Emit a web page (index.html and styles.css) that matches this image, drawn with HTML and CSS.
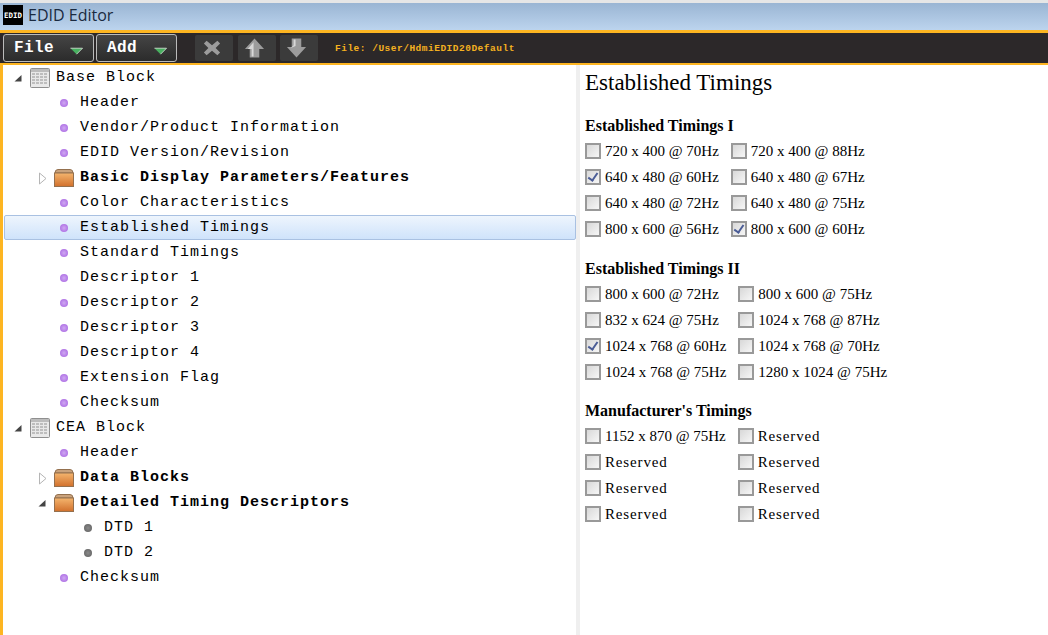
FILE: index.html
```html
<!DOCTYPE html>
<html lang="en">
    <head>
        <meta charset="utf-8">
        <title>EDID Editor</title>
        <link rel="stylesheet" href="styles.css">
    </head>
    <body>
        <svg class="defs" width="0" height="0">
            <symbol id="table" viewBox="0 0 20 20">
                <rect x="0.5" y="0.5" width="19" height="19" rx="1" fill="#e9e9e9" stroke="#8f8f8f"/>
                <rect x="1" y="1" width="18" height="3" fill="#bdbdbd"/>
                <path d="M2 6h16M2 9h16M2 12h16M2 15h16" stroke="#b0b0b0" stroke-width="1.4" stroke-dasharray="3 1"/>
            </symbol>
            <symbol id="folder" viewBox="0 0 20 20">
                <defs>
                    <linearGradient id="folder_fill" x1="0" y1="0" x2="0" y2="1">
                        <stop offset="0" stop-color="#f4b56e"/>
                        <stop offset="1" stop-color="#d1702c"/>
                    </linearGradient>
                </defs>
                <path d="M1 5 Q1 1.5 4 1.5 H16 Q19 1.5 19 5 Z" fill="#c9a27c" stroke="#94704e"/>
                <rect x="0.5" y="5" width="19" height="13.5" fill="url(#folder_fill)" stroke="#94704e"/>
            </symbol>
            <symbol id="open" viewBox="0 0 14 14">
                <path d="M10.5 4 V10.5 H3.5 Z" fill="#444"/>
            </symbol>
            <symbol id="closed" viewBox="0 0 14 14">
                <path d="M4.5 2 L11 7.5 L4.5 13 Z" fill="#fff" stroke="#b5b5b5"/>
            </symbol>
            <symbol id="caret" viewBox="0 0 14 8">
                <path d="M0.5 1 H13.5 L7 7.5 Z" fill="#48b060"/>
                <path d="M0.5 1 H13.5 L7 7.5" fill="none" stroke="#e8efe8" stroke-width="0.8"/>
            </symbol>
        </svg>

        <div class="titlebar">
            <span class="logo">EDID</span>
            <span class="app_name">EDID Editor</span>
        </div>

        <div class="toolbar">
            <button class="menu_btn file_btn">File <svg class="caret"><use href="#caret"/></svg></button>
            <button class="menu_btn add_btn">Add <svg class="caret"><use href="#caret"/></svg></button>
            <div class="tool_group">
                <button class="tool_btn">
                    <svg width="18" height="18" viewBox="0 0 20 20"><path d="M4 2 L10 7 L16 2 L19 5 L14 10 L19 15 L16 18 L10 13 L4 18 L1 15 L6 10 L1 5 Z" fill="#9c9c9c"/></svg>
                </button>
                <button class="tool_btn">
                    <svg width="21" height="22" viewBox="0 0 22 22"><path d="M11 1 L21 12 H16 V21 H6 V12 H1 Z" fill="#9c9c9c"/><path d="M10 5 L4 12 H8 V20 H10 Z" fill="#d8d8d8"/></svg>
                </button>
                <button class="tool_btn">
                    <svg width="21" height="22" viewBox="0 0 22 22"><path d="M11 21 L21 10 H16 V1 H6 V10 H1 Z" fill="#9c9c9c"/><path d="M8 2 H10 V9 L5 11 L8 8 Z" fill="#d8d8d8"/></svg>
                </button>
            </div>
            <span class="file_path">File: /User/HdmiEDID20Default</span>
        </div>

        <div class="main">
            <ul class="tree">
                <li class="row"><svg class="twisty"><use href="#open"/></svg><svg class="icon"><use href="#table"/></svg><span>Base Block</span></li>
                <li class="row d1"><span class="twisty"></span><span class="icon"><i class="dot"></i></span><span>Header</span></li>
                <li class="row d1"><span class="twisty"></span><span class="icon"><i class="dot"></i></span><span>Vendor/Product Information</span></li>
                <li class="row d1"><span class="twisty"></span><span class="icon"><i class="dot"></i></span><span>EDID Version/Revision</span></li>
                <li class="row d1"><svg class="twisty"><use href="#closed"/></svg><svg class="icon"><use href="#folder"/></svg><b>Basic Display Parameters/Features</b></li>
                <li class="row d1"><span class="twisty"></span><span class="icon"><i class="dot"></i></span><span>Color Characteristics</span></li>
                <li class="row d1 selected"><span class="twisty"></span><span class="icon"><i class="dot"></i></span><span>Established Timings</span></li>
                <li class="row d1"><span class="twisty"></span><span class="icon"><i class="dot"></i></span><span>Standard Timings</span></li>
                <li class="row d1"><span class="twisty"></span><span class="icon"><i class="dot"></i></span><span>Descriptor 1</span></li>
                <li class="row d1"><span class="twisty"></span><span class="icon"><i class="dot"></i></span><span>Descriptor 2</span></li>
                <li class="row d1"><span class="twisty"></span><span class="icon"><i class="dot"></i></span><span>Descriptor 3</span></li>
                <li class="row d1"><span class="twisty"></span><span class="icon"><i class="dot"></i></span><span>Descriptor 4</span></li>
                <li class="row d1"><span class="twisty"></span><span class="icon"><i class="dot"></i></span><span>Extension Flag</span></li>
                <li class="row d1"><span class="twisty"></span><span class="icon"><i class="dot"></i></span><span>Checksum</span></li>
                <li class="row"><svg class="twisty"><use href="#open"/></svg><svg class="icon"><use href="#table"/></svg><span>CEA Block</span></li>
                <li class="row d1"><span class="twisty"></span><span class="icon"><i class="dot"></i></span><span>Header</span></li>
                <li class="row d1"><svg class="twisty"><use href="#closed"/></svg><svg class="icon"><use href="#folder"/></svg><b>Data Blocks</b></li>
                <li class="row d1"><svg class="twisty"><use href="#open"/></svg><svg class="icon"><use href="#folder"/></svg><b>Detailed Timing Descriptors</b></li>
                <li class="row d2"><span class="twisty"></span><span class="icon"><i class="dot grey"></i></span><span>DTD 1</span></li>
                <li class="row d2"><span class="twisty"></span><span class="icon"><i class="dot grey"></i></span><span>DTD 2</span></li>
                <li class="row d1"><span class="twisty"></span><span class="icon"><i class="dot"></i></span><span>Checksum</span></li>
            </ul>

            <div class="details">
                <h1>Established Timings</h1>

                <h2>Established Timings I</h2>
                <div class="timings">
                    <label><input type="checkbox">720 x 400 @ 70Hz</label>
                    <label><input type="checkbox">720 x 400 @ 88Hz</label>
                    <label><input type="checkbox" checked>640 x 480 @ 60Hz</label>
                    <label><input type="checkbox">640 x 480 @ 67Hz</label>
                    <label><input type="checkbox">640 x 480 @ 72Hz</label>
                    <label><input type="checkbox">640 x 480 @ 75Hz</label>
                    <label><input type="checkbox">800 x 600 @ 56Hz</label>
                    <label><input type="checkbox" checked>800 x 600 @ 60Hz</label>
                </div>

                <h2>Established Timings II</h2>
                <div class="timings">
                    <label><input type="checkbox">800 x 600 @ 72Hz</label>
                    <label><input type="checkbox">800 x 600 @ 75Hz</label>
                    <label><input type="checkbox">832 x 624 @ 75Hz</label>
                    <label><input type="checkbox">1024 x 768 @ 87Hz</label>
                    <label><input type="checkbox" checked>1024 x 768 @ 60Hz</label>
                    <label><input type="checkbox">1024 x 768 @ 70Hz</label>
                    <label><input type="checkbox">1024 x 768 @ 75Hz</label>
                    <label><input type="checkbox">1280 x 1024 @ 75Hz</label>
                </div>

                <h2 class="last_title">Manufacturer's Timings</h2>
                <div class="timings">
                    <label><input type="checkbox">1152 x 870 @ 75Hz</label>
                    <label class="reserved"><input type="checkbox">Reserved</label>
                    <label class="reserved"><input type="checkbox">Reserved</label>
                    <label class="reserved"><input type="checkbox">Reserved</label>
                    <label class="reserved"><input type="checkbox">Reserved</label>
                    <label class="reserved"><input type="checkbox">Reserved</label>
                    <label class="reserved"><input type="checkbox">Reserved</label>
                    <label class="reserved"><input type="checkbox">Reserved</label>
                </div>
            </div>
        </div>
    </body>
</html>
```

FILE: styles.css
```css
html, body{
    margin: 0;
    height: 100%;
}

body{
    display: flex;
    flex-direction: column;
    height: 635px;
    overflow: hidden;
    background-color: white;
}

.defs{
    display: block;
    height: 0;
}

.titlebar{
    display: flex;
    align-items: center;
    box-sizing: border-box;
    height: 30px;
    padding-left: 3px;
    padding-bottom: 3px;
    border-top: 3px solid #e6e6e6;
    background: linear-gradient(#9ab5d3, #bcd4ee);
}

.logo{
    display: flex;
    align-items: center;
    justify-content: center;
    width: 20px;
    height: 20px;
    margin-right: 5px;
    background-color: black;
    color: white;
    font: bold 7.5px "DejaVu Sans Mono", monospace;
}

.app_name{
    font: 16px "Open Sans", sans-serif;
    color: #1a2a40;
}

.toolbar{
    display: flex;
    align-items: center;
    box-sizing: border-box;
    height: 35px;
    padding-left: 3px;
    border-top: 3px solid #fdb521;
    border-bottom: 2px solid #fdb521;
    background-color: #2c2829;
}

.menu_btn{
    display: flex;
    align-items: center;
    box-sizing: border-box;
    height: 28px;
    padding: 0 0 0 10px;
    border: 1px solid #bbb;
    border-radius: 3px;
    background: linear-gradient(#454545, #2b2b2b);
    color: white;
    font: bold 16px "Liberation Mono", monospace;
    letter-spacing: 0.4px;
}

.file_btn{
    width: 91px;
    margin-right: 2px;
}

.add_btn{
    width: 81px;
}

.caret{
    width: 13px;
    height: 8px;
    margin-top: 6px;
}

.file_btn .caret{
    margin-left: 16px;
}

.add_btn .caret{
    margin-left: 17px;
}

.tool_group{
    display: flex;
    gap: 4.5px;
    margin-left: 18px;
}

.tool_btn{
    display: flex;
    align-items: center;
    justify-content: center;
    width: 38px;
    height: 26px;
    padding: 0 5px 0 0;
    border: none;
    border-radius: 2px;
    background-color: #3b3b3b;
}

.file_path{
    margin-left: 17px;
    font: bold 9.5px "Liberation Mono", monospace;
    letter-spacing: 0.5px;
    color: #f5b120;
}

.main{
    display: flex;
    flex: 1;
    min-height: 0;
    border-left: 3px solid #fdb521;
}

.tree{
    box-sizing: border-box;
    width: 573px;
    margin: 0;
    padding: 0;
    list-style: none;
    font: 15px "Liberation Mono", monospace;
    letter-spacing: 1px;
    color: black;
}

.row{
    display: flex;
    align-items: center;
    box-sizing: border-box;
    height: 25px;
    padding-left: 8px;
}

.d1{
    padding-left: 32px;
}

.d2{
    padding-left: 56px;
}

.selected{
    margin-left: 1px;
    padding-left: 30px;
    border: 1px solid #a9c1e2;
    border-radius: 2px;
    background: linear-gradient(#eef5fd, #cfe3fb);
}

.twisty{
    flex: none;
    width: 14px;
    height: 14px;
    margin-right: 5px;
}

.icon{
    display: flex;
    flex: none;
    align-items: center;
    justify-content: center;
    width: 20px;
    height: 20px;
    margin-right: 6px;
}

.dot{
    width: 8px;
    height: 8px;
    border-radius: 50%;
    background: radial-gradient(#cfa8f2, #a45fe0);
}

.dot.grey{
    background: radial-gradient(#8a8a8a, #5e5e5e);
}

.details{
    flex: 1;
    padding-left: 5px;
    border-left: 4px solid #efefef;
    font-family: "Liberation Serif", serif;
    font-size: 15px;
    color: black;
}

h1{
    height: 30px;
    margin: 4px 0 0 0;
    font-size: 23px;
    font-weight: normal;
    line-height: 28px;
}

h2{
    height: 18px;
    margin: 18px 0 0 0;
    font-size: 16px;
    line-height: 18px;
}

h2.last_title{
    margin-top: 17px;
}

.timings{
    display: grid;
    grid-template-columns: auto auto;
    justify-content: start;
    column-gap: 12px;
    margin-top: 3px;
}

.timings label{
    display: flex;
    align-items: center;
    height: 26px;
}

.timings .reserved{
    letter-spacing: 0.85px;
}

input[type="checkbox"]{
    appearance: none;
    position: relative;
    box-sizing: border-box;
    width: 16px;
    height: 16px;
    margin: 0 4px 0 0;
    border: 2px solid #999;
    background: linear-gradient(135deg, #d8d8d8, #f6f6f6);
}

input[type="checkbox"]:checked::after{
    content: "";
    position: absolute;
    left: 3px;
    top: 0;
    width: 4px;
    height: 8px;
    border: solid #4a5c96;
    border-width: 0 2px 2px 0;
    transform: rotate(35deg);
}
```
